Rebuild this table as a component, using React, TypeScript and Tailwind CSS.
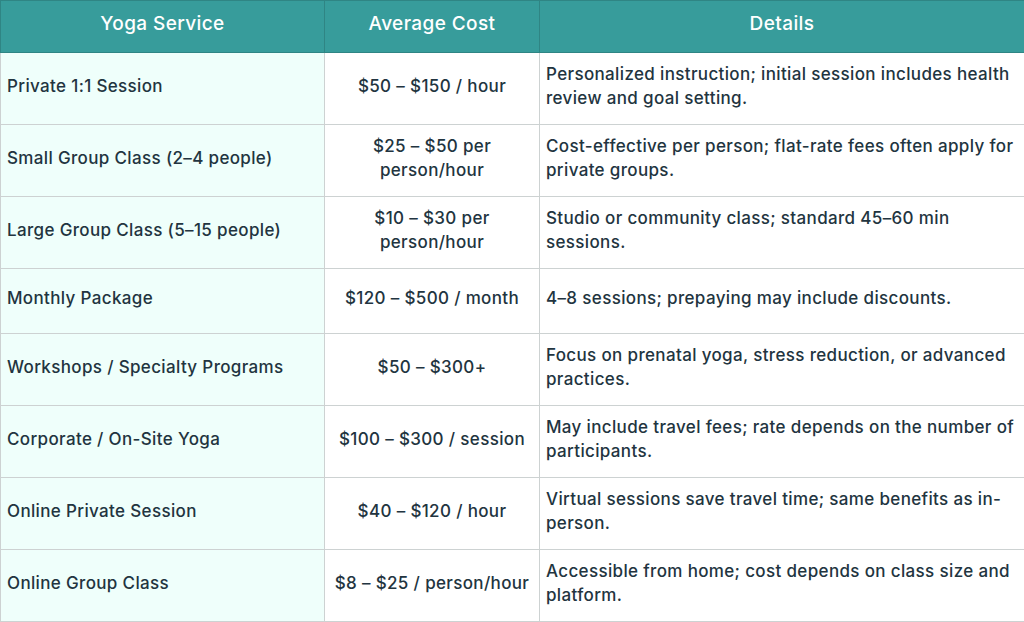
const rows = [
  {
    service: 'Private 1:1 Session',
    cost: '$50 – $150 / hour',
    details: 'Personalized instruction; initial session includes health review and goal setting.',
    h: 'h-[72px]',
  },
  {
    service: 'Small Group Class (2–4 people)',
    cost: '$25 – $50 per person/hour',
    details: 'Cost-effective per person; flat-rate fees often apply for private groups.',
    h: 'h-[72px]',
  },
  {
    service: 'Large Group Class (5–15 people)',
    cost: '$10 – $30 per person/hour',
    details: 'Studio or community class; standard 45–60 min sessions.',
    h: 'h-[72px]',
  },
  {
    service: 'Monthly Package',
    cost: '$120 – $500 / month',
    details: '4–8 sessions; prepaying may include discounts.',
    h: 'h-[65px]',
  },
  {
    service: 'Workshops / Specialty Programs',
    cost: '$50 – $300+',
    details: 'Focus on prenatal yoga, stress reduction, or advanced practices.',
    h: 'h-[72px]',
  },
  {
    service: 'Corporate / On-Site Yoga',
    cost: '$100 – $300 / session',
    details: 'May include travel fees; rate depends on the number of participants.',
    h: 'h-[72px]',
  },
  {
    service: 'Online Private Session',
    cost: '$40 – $120 / hour',
    details: 'Virtual sessions save travel time; same benefits as in-person.',
    h: 'h-[72px]',
  },
  {
    service: 'Online Group Class',
    cost: '$8 – $25 / person/hour',
    details: 'Accessible from home; cost depends on class size and platform.',
    h: 'h-[72px]',
  },
];

export default function App() {
  return (
    <div className="w-[1024px] h-[622px] bg-white overflow-hidden font-['Inter',sans-serif]">
      <table className="w-[1024px] border-collapse table-fixed text-[17px] tracking-[0.35px] font-medium leading-6 text-[#223440]">
        <colgroup>
          <col className="w-[324px]" />
          <col className="w-[215px]" />
          <col className="w-[485px]" />
        </colgroup>
        <thead>
          <tr className="h-[52px] bg-[#379c9b] text-white text-[19px] tracking-[0.4px]">
            <th className="border border-[#2f8584] pb-[6px] font-medium text-center">Yoga Service</th>
            <th className="border border-[#2f8584] pb-[6px] font-medium text-center">Average Cost</th>
            <th className="border border-[#2f8584] pb-[6px] font-medium text-center">Details</th>
          </tr>
        </thead>
        <tbody>
          {rows.map((r) => (
            <tr key={r.service} className={r.h}>
              <td className="border border-[#cdd2d2] bg-[#effffb] pl-[6px] pr-2 pb-[6px] align-middle">{r.service}</td>
              <td className="border border-[#cdd2d2] px-1 pb-[6px] text-center align-middle">{r.cost}</td>
              <td className="border border-[#cdd2d2] pl-[6px] pr-2 pb-[6px] align-middle">{r.details}</td>
            </tr>
          ))}
        </tbody>
      </table>
    </div>
  );
}
